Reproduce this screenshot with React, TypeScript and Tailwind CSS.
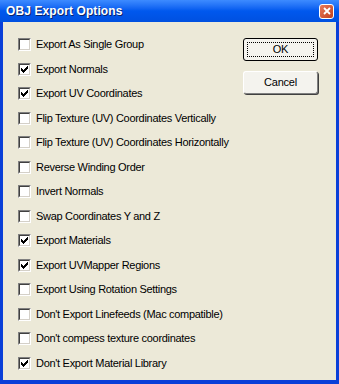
import React from 'react';

const OPTIONS: { label: string; checked: boolean }[] = [
  { label: 'Export As Single Group', checked: false },
  { label: 'Export Normals', checked: true },
  { label: 'Export UV Coordinates', checked: true },
  { label: 'Flip Texture (UV) Coordinates Vertically', checked: false },
  { label: 'Flip Texture (UV) Coordinates Horizontally', checked: false },
  { label: 'Reverse Winding Order', checked: false },
  { label: 'Invert Normals', checked: false },
  { label: 'Swap Coordinates Y and Z', checked: false },
  { label: 'Export Materials', checked: true },
  { label: 'Export UVMapper Regions', checked: true },
  { label: 'Export Using Rotation Settings', checked: false },
  { label: "Don't Export Linefeeds (Mac compatible)", checked: false },
  { label: "Don't compess texture coordinates", checked: false },
  { label: "Don't Export Material Library", checked: true },
];

function CheckBox({ checked }: { checked: boolean }) {
  return (
    <div className="w-[13px] h-[13px] shrink-0 border-t border-l border-[#808080] border-r border-b border-r-white border-b-white">
      <div className="w-full h-full bg-white border-t border-l border-[#404040] border-r border-b border-r-[#d4d0c8] border-b-[#d4d0c8] flex items-center justify-center">
        {checked && (
          <svg width="7" height="7" viewBox="0 0 7 7" shapeRendering="crispEdges">
            <path d="M0 2h1v3h-1zM1 3h1v3h-1zM2 4h1v3h-1zM3 3h1v3h-1zM4 2h1v3h-1zM5 1h1v3h-1zM6 0h1v3h-1z" fill="#000" />
          </svg>
        )}
      </div>
    </div>
  );
}

function XpButton({ label, isDefault }: { label: string; isDefault?: boolean }) {
  return (
    <button
      className={
        'w-[75px] h-[23px] rounded-[3px] flex items-center justify-center text-[11px] text-black tracking-[-0.2px] ' +
        (isDefault
          ? 'border border-black bg-[#f4f3ee]'
          : 'border border-t-white border-l-white border-r-[#808080] border-b-[#808080] bg-[#f4f3ee] shadow-[1px_1px_0_#404040]')
      }
    >
      {isDefault ? (
        <span className="w-[67px] h-[15px] border border-dotted border-black flex items-center justify-center leading-none">
          {label}
        </span>
      ) : (
        label
      )}
    </button>
  );
}

export default function App() {
  return (
    <div
      className="w-[339px] h-[384px] flex flex-col bg-[#0a3fd8] overflow-hidden"
      style={{ fontFamily: '"Liberation Sans", Arial, sans-serif' }}
    >
      {/* Title bar */}
      <div className="h-[22px] shrink-0 flex items-center justify-between pl-[6px] pr-[5px] bg-gradient-to-b from-[#3d8bff] via-[#0058ee] to-[#0050e0]">
        <span
          className="text-white font-bold text-[12px] tracking-[0.1px]"
          style={{ textShadow: '1px 1px 0 #0a246a' }}
        >
          OBJ Export Options
        </span>
        <div className="w-[15px] h-[15px] rounded-[3px] border border-white bg-gradient-to-br from-[#e8795a] to-[#c1401b] flex items-center justify-center">
          <svg width="8" height="8" viewBox="0 0 8 8">
            <path d="M1 1L7 7M7 1L1 7" stroke="#fff" strokeWidth="1.8" />
          </svg>
        </div>
      </div>

      {/* Body */}
      <div className="flex-1 mx-[3px] mb-[4px] bg-[#ece9d8] flex justify-between pt-[16px] pl-[15px] pr-[18px]">
        <div className="flex flex-col gap-[11.5px]">
          {OPTIONS.map((o) => (
            <div key={o.label} className="h-[13px] flex items-center gap-[5px]">
              <CheckBox checked={o.checked} />
              <span className="text-[11px] text-black whitespace-nowrap leading-none tracking-[-0.3px]">{o.label}</span>
            </div>
          ))}
        </div>
        <div className="flex flex-col gap-[10px]">
          <XpButton label="OK" isDefault />
          <XpButton label="Cancel" />
        </div>
      </div>
    </div>
  );
}
